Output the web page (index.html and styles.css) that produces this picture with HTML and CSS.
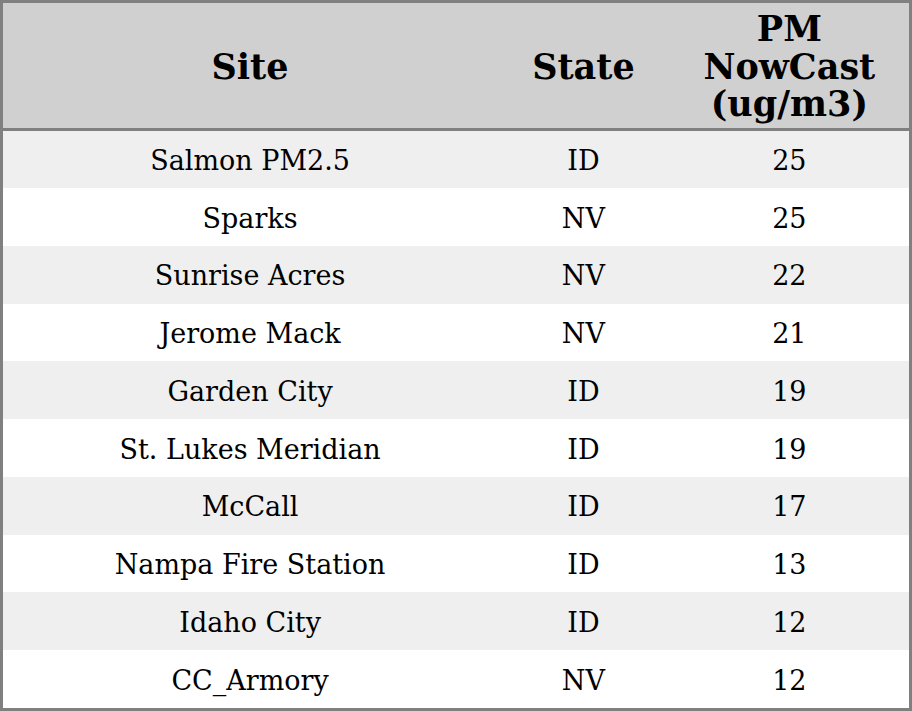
FILE: index.html
```html
<!DOCTYPE html>
<html>
<head>
<meta charset="utf-8">
<link rel="stylesheet" href="styles.css">
</head>
<body>
<table class="aq">
  <colgroup>
    <col class="c-site">
    <col class="c-state">
    <col class="c-pm">
  </colgroup>
  <thead>
    <tr><th>Site</th><th>State</th><th>PM<br>NowCast<br>(ug/m3)</th></tr>
  </thead>
  <tbody>
    <tr><td>Salmon PM2.5</td><td>ID</td><td>25</td></tr>
    <tr><td>Sparks</td><td>NV</td><td>25</td></tr>
    <tr><td>Sunrise Acres</td><td>NV</td><td>22</td></tr>
    <tr><td>Jerome Mack</td><td>NV</td><td>21</td></tr>
    <tr><td>Garden City</td><td>ID</td><td>19</td></tr>
    <tr><td>St. Lukes Meridian</td><td>ID</td><td>19</td></tr>
    <tr><td>McCall</td><td>ID</td><td>17</td></tr>
    <tr><td>Nampa Fire Station</td><td>ID</td><td>13</td></tr>
    <tr><td>Idaho City</td><td>ID</td><td>12</td></tr>
    <tr><td>CC_Armory</td><td>NV</td><td>12</td></tr>
  </tbody>
</table>
</body>
</html>
```
FILE: styles.css
```css
html, body {
  margin: 0;
  padding: 0;
  background: #ffffff;
}
.aq {
  width: 912px;
  height: 711px;
  border-collapse: collapse;
  table-layout: fixed;
  border: 3px solid #808080;
  font-family: "DejaVu Serif", serif;
  color: #000;
}
.c-site { width: 494px; }
.c-state { width: 172px; }
.c-pm { width: 240px; }
.aq th {
  background: #d0d0d0;
  font-size: 35px;
  font-weight: bold;
  line-height: 37.5px;
  padding: 7px 0 5px 0;
  height: 112px;
  border-bottom: 3px solid #808080;
  text-align: center;
  vertical-align: middle;
}
.aq td {
  font-size: 27px;
  line-height: 31px;
  padding: 2px 0 0 0;
  height: 55px;
  text-align: center;
  vertical-align: middle;
}
.aq tbody tr:nth-child(odd) td {
  background: #efefef;
}
```
